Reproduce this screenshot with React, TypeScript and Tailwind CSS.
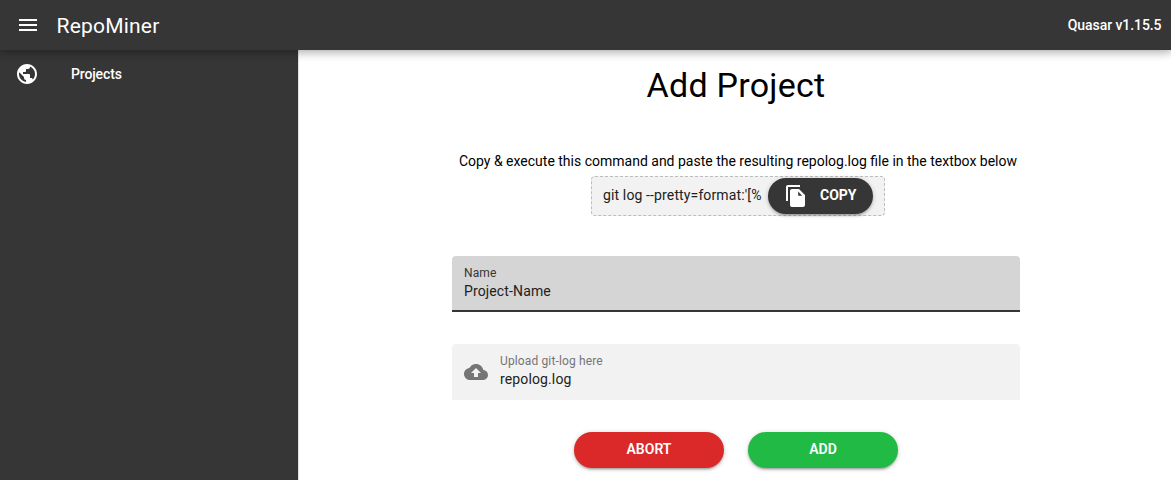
import type { ReactNode } from 'react'

const BUTTON_SHADOW =
  'shadow-[0_1px_5px_rgba(0,0,0,0.2),0_2px_2px_rgba(0,0,0,0.14),0_3px_1px_-2px_rgba(0,0,0,0.12)]'

function Icon({ d, className = 'size-6' }: { d: string; className?: string }) {
  return (
    <svg viewBox="0 0 24 24" fill="currentColor" className={`shrink-0 ${className}`} aria-hidden="true">
      <path d={d} />
    </svg>
  )
}

const icons = {
  menu: 'M3 18h18v-2H3v2zm0-5h18v-2H3v2zm0-7v2h18V6H3z',
  globe:
    'M12 2C6.48 2 2 6.48 2 12s4.48 10 10 10 10-4.48 10-10S17.52 2 12 2zm-1 17.93c-3.95-.49-7-3.85-7-7.93 0-.62.08-1.21.21-1.79L9 15v1c0 1.1.9 2 2 2v1.93zm6.9-2.54c-.26-.81-1-1.39-1.9-1.39h-1v-3c0-.55-.45-1-1-1H8v-2h2c.55 0 1-.45 1-1V7h2c1.1 0 2-.9 2-2v-.41c2.93 1.19 5 4.06 5 7.41 0 2.08-.8 3.97-2.1 5.39z',
  fileCopy:
    'M16 1H4c-1.1 0-2 .9-2 2v14h2V3h12V1zm-1 4l6 6v10c0 1.1-.9 2-2 2H7.99C6.89 23 6 22.1 6 21l.01-14c0-1.1.89-2 1.99-2h7zm-.8 6.700h4L14.200 7.500v4.200z',
  cloudUpload:
    'M19.35 10.04C18.67 6.59 15.64 4 12 4 9.11 4 6.6 5.64 5.35 8.04 2.34 8.36 0 10.91 0 14c0 3.31 2.69 6 6 6h13c2.76 0 5-2.240 5-5 0-2.640-2.050-4.780-4.650-4.960zM14 13v4h-4v-4H7l5-5 5 5h-3z',
}

function ActionButton({ color, children }: { color: string; children: ReactNode }) {
  return (
    <button
      className={`h-9 w-[150px] rounded-[28px] pb-0.5 text-sm leading-6 font-semibold text-white uppercase ${color} ${BUTTON_SHADOW}`}
    >
      {children}
    </button>
  )
}

export default function App() {
  return (
    <div className="flex h-[480px] flex-col overflow-hidden bg-white font-[Roboto,sans-serif] text-sm leading-[21px] text-black">
      <header className="relative z-10 flex h-[50px] shrink-0 items-center bg-[#363636] pr-[9.5px] pl-4 text-white shadow-[0_0_10px_2px_rgba(0,0,0,0.2),0_0_10px_rgba(0,0,0,0.24)]">
        <button aria-label="Menu">
          <Icon d={icons.menu} />
        </button>
        <h1 className="ml-[16.5px] flex-1 pt-0.5 text-[21px] leading-8 font-normal tracking-[0.01em]">RepoMiner</h1>
        <span className="font-medium tracking-[-0.005em]">Quasar v1.15.5</span>
      </header>

      <div className="flex min-h-0 flex-1">
        <aside className="w-[299px] shrink-0 border-r border-[#e0e0e0] bg-[#363636] text-white">
          <a className="flex h-12 items-center px-[15px] font-medium tracking-[-0.01em]">
            <Icon d={icons.globe} />
            <span className="ml-8">Projects</span>
          </a>
        </aside>

        <main className="flex min-w-0 flex-1 flex-col items-center pl-0.5">
          <h2 className="mt-[15px] text-[34px] leading-10 font-normal tracking-[0.00735em]">Add Project</h2>
          <div className="flex flex-col items-center pt-[46px] pl-1">
            <p>Copy &amp; execute this command and paste the resulting repolog.log file in the textbox below</p>
            <div className="mt-1 flex h-10 w-[294px] items-center rounded border border-dashed border-[#bdbdbd] bg-[#f2f2f2] px-[11px]">
              <div className="w-[165px] overflow-hidden pb-0.5 whitespace-nowrap text-[#212121]">
                <span className="tracking-[0.00937em]">git log --pretty=format:'[%</span>
              </div>
              <button
                className={`flex h-9 w-[105px] shrink-0 items-center rounded-[28px] bg-[#363636] pl-4 font-bold text-white uppercase ${BUTTON_SHADOW}`}
              >
                <Icon d={icons.fileCopy} />
                <span className="ml-3 pb-0.5">Copy</span>
              </button>
            </div>
          </div>

          <label className="mt-10 flex h-14 w-[568px] flex-col rounded-t border-b-2 border-[#363636] bg-[#d5d5d5] px-3 pt-[7px] tracking-[0.00937em]">
            <span className="text-xs leading-5 text-[#363636]">Name</span>
            <span className="leading-4 text-[#212121]">Project-Name</span>
          </label>

          <label className="mt-8 flex h-14 w-[568px] rounded-t bg-[#f2f2f2] px-3 tracking-[0.00937em]">
            <Icon d={icons.cloudUpload} className="mt-4 size-6 text-[#757575]" />
            <span className="ml-3 flex flex-col pt-[7px]">
              <span className="text-xs leading-5 text-[#757575]">Upload git-log here</span>
              <span className="leading-4 text-[#212121]">repolog.log</span>
            </span>
          </label>

          <div className="mt-8 flex gap-6">
            <ActionButton color="bg-[#db2828]">Abort</ActionButton>
            <ActionButton color="bg-[#21ba45]">Add</ActionButton>
          </div>
        </main>
      </div>
    </div>
  )
}
